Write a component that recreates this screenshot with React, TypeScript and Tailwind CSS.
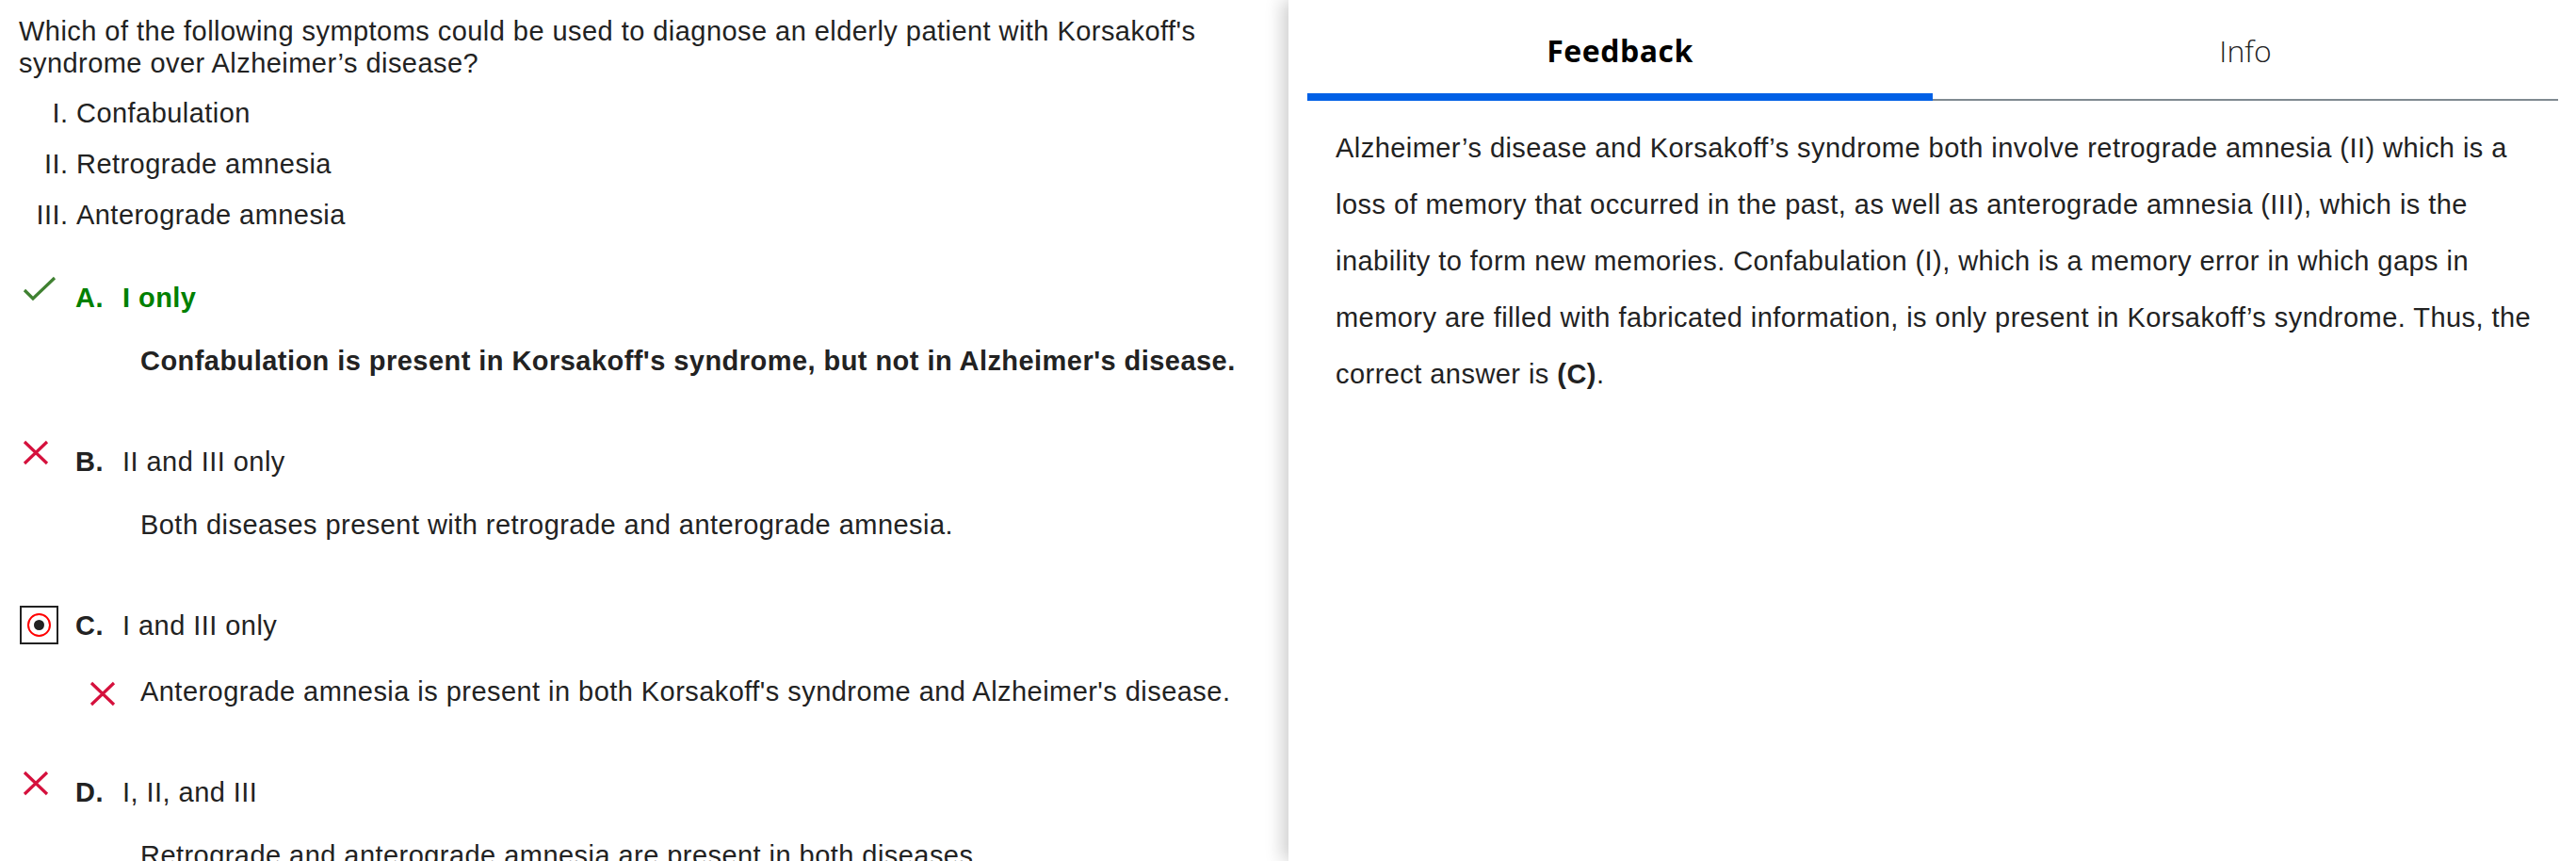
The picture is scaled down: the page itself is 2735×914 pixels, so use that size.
import React from 'react'

type Mark = 'check' | 'cross' | 'radio'

interface Option {
  letter: string
  text: string
  mark: Mark
  correct?: boolean
  explanation: string
  explanationCross?: boolean
}

const options: Option[] = [
  {
    letter: 'A.',
    text: 'I only',
    mark: 'check',
    correct: true,
    explanation: "Confabulation is present in Korsakoff's syndrome, but not in Alzheimer's disease.",
  },
  {
    letter: 'B.',
    text: 'II and III only',
    mark: 'cross',
    explanation: 'Both diseases present with retrograde and anterograde amnesia.',
  },
  {
    letter: 'C.',
    text: 'I and III only',
    mark: 'radio',
    explanation: "Anterograde amnesia is present in both Korsakoff's syndrome and Alzheimer's disease.",
    explanationCross: true,
  },
  {
    letter: 'D.',
    text: 'I, II, and III',
    mark: 'cross',
    explanation: 'Retrograde and anterograde amnesia are present in both diseases.',
  },
]

function CheckIcon() {
  return (
    <svg width="36" height="28" viewBox="0 0 36 28" className="ml-[4px] -mt-[6px]">
      <polyline points="2,15 11,24 34,2" fill="none" stroke="#3f8131" strokeWidth="3.2" />
    </svg>
  )
}

function CrossIcon({ className = '' }: { className?: string }) {
  return (
    <svg width="28" height="27" viewBox="0 0 28 27" className={className}>
      <path d="M2 2 L26 25 M26 2 L2 25" fill="none" stroke="#d5113d" strokeWidth="3.2" />
    </svg>
  )
}

function RadioIcon() {
  return (
    <div className="ml-[1px] -mt-[4px] w-[41px] h-[41px] border-2 border-[#222] flex items-center justify-center">
      <div className="w-[25px] h-[25px] rounded-full border-2 border-[#f00] flex items-center justify-center">
        <div className="w-[11px] h-[11px] rounded-full bg-[#222]" />
      </div>
    </div>
  )
}

export default function App() {
  return (
    <div className="h-[914px] w-full overflow-hidden flex bg-white font-['Liberation_Sans',Arial,sans-serif] text-[#222] tracking-[0.45px]">
      <div className="w-[1368px] shrink-0 px-5 pt-4 text-[29px] leading-[34px]">
        <p>Which of the following symptoms could be used to diagnose an elderly patient with Korsakoff's syndrome over Alzheimer’s disease?</p>
        <ol className="mt-[19px] list-[upper-roman] pl-[61px] space-y-5">
          <li>Confabulation</li>
          <li>Retrograde amnesia</li>
          <li>Anterograde amnesia</li>
        </ol>

        <div className="mt-[54px] space-y-[73px]">
          {options.map(o => (
            <div key={o.letter}>
              <div className="flex items-start">
                <div className="w-[60px] shrink-0 flex">
                  {o.mark === 'check' && <CheckIcon />}
                  {o.mark === 'cross' && <CrossIcon className="ml-[4px] -mt-[6px]" />}
                  {o.mark === 'radio' && <RadioIcon />}
                </div>
                <span className={'w-[50px] shrink-0 font-bold ' + (o.correct ? 'text-[#008000]' : '')}>{o.letter}</span>
                <span className={o.correct ? 'font-bold text-[#008000]' : ''}>{o.text}</span>
              </div>
              <div className="mt-[33px] flex items-center">
                <div className="w-[129px] shrink-0 flex">
                  {o.explanationCross && <CrossIcon className="ml-[75px] mt-[4px]" />}
                </div>
                <p className={o.correct ? 'font-bold' : ''}>{o.explanation}</p>
              </div>
            </div>
          ))}
        </div>
      </div>

      <div className="relative z-10 flex-1 bg-white shadow-[-6px_0_18px_rgba(0,0,0,0.2)]">
        <div className="ml-5 mr-[19px] flex font-['Open_Sans',sans-serif] text-[32px] leading-[44px] tracking-normal">
          <div className="flex-1 h-[107px] pt-[32px] text-center font-bold text-black tracking-[0.5px] border-b-8 border-[#0060e6]">
            Feedback
          </div>
          <div className="flex-1 h-[107px] pt-[32px] text-center font-light text-[#222] border-b-2 border-[#808a91] self-end">
            Info
          </div>
        </div>
        <p className="mt-5 pl-[50px] pr-[36px] text-[29px] leading-[60px]">
          Alzheimer’s disease and Korsakoff’s syndrome both involve retrograde amnesia (II) which is a loss of memory that occurred in the past, as well as anterograde amnesia (III), which is the inability to form new memories. Confabulation (I), which is a memory error in which gaps in memory are filled with fabricated information, is only present in Korsakoff’s syndrome. Thus, the correct answer is <b>(C)</b>.
        </p>
      </div>
    </div>
  )
}
